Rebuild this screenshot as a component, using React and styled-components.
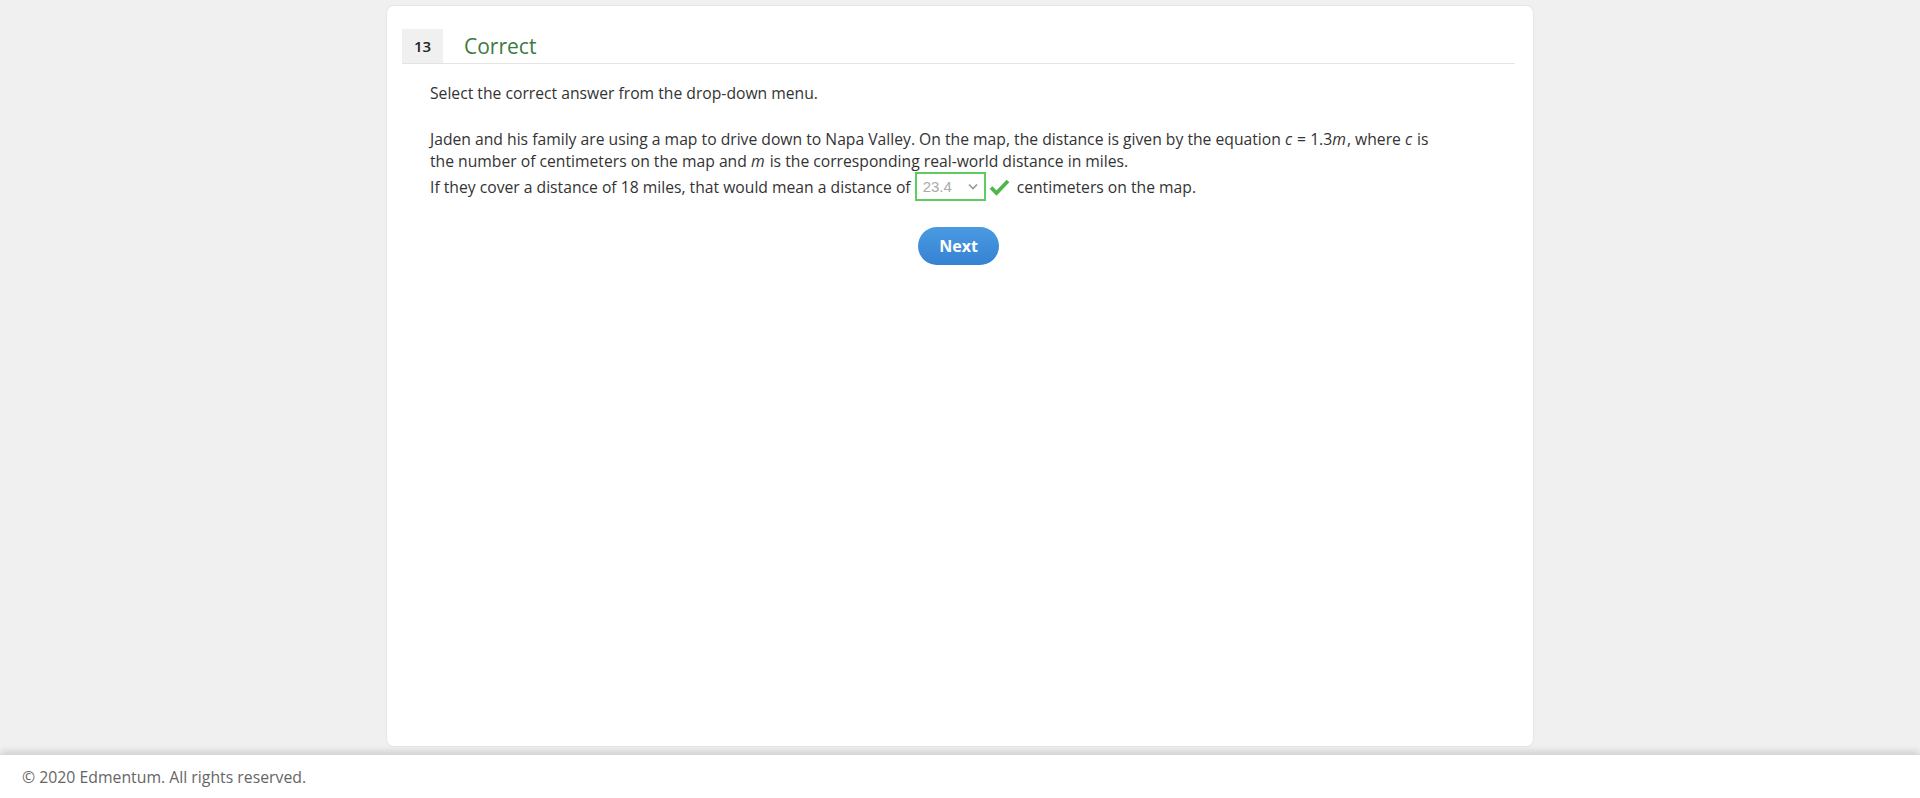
import React from 'react';
import styled, { createGlobalStyle } from 'styled-components';

const GlobalStyle = createGlobalStyle`
  html, body {
    margin: 0;
    padding: 0;
    height: 100%;
  }
  body {
    background: #f0f0f0;
    font-family: 'Open Sans', 'DejaVu Sans', sans-serif;
    color: #333;
  }
  #root {
    height: 100%;
  }
`;

const Page = styled.div`
  display: flex;
  flex-direction: column;
  height: 100vh;
`;

const Main = styled.main`
  flex: 1;
  display: flex;
  justify-content: center;
  padding: 5px 0 7px;
  min-height: 0;
`;

const Card = styled.section`
  width: 1148px;
  box-sizing: border-box;
  background: #fff;
  border: 1px solid #e6e6e6;
  border-radius: 8px;
  padding: 23px 18px 0 15px;
`;

const Header = styled.div`
  display: flex;
  align-items: center;
  height: 34px;
  border-bottom: 1px solid #e4e4e4;
`;

const Badge = styled.span`
  display: flex;
  align-items: center;
  justify-content: center;
  width: 41px;
  height: 100%;
  background: #f0f0f0;
  font-size: 15px;
  font-weight: 600;
  color: #222;
`;

const Status = styled.h2`
  margin: 0 0 0 21px;
  font-size: 21px;
  font-weight: 500;
  color: #3d7a3f;
  line-height: 1;
`;

const Body = styled.div`
  padding: 18px 0 0 28px;
  width: 1022px;
  font-size: 15.7px;
  line-height: 22px;
  color: #333;
`;

const Instruction = styled.p`
  margin: 0 0 24px;
`;

const Question = styled.p`
  margin: 0;
`;

const Var = styled.i`
  font-style: italic;
  padding-right: 1px;
`;

const Line = styled.span`
  display: flex;
  align-items: center;
  height: 29px;
`;

const Select = styled.span`
  display: inline-flex;
  align-items: center;
  justify-content: space-between;
  box-sizing: border-box;
  width: 71px;
  height: 29px;
  margin: 0 3px 0 4px;
  padding: 0 6px 0 6px;
  border: 2px solid #5fcc5f;
  font-family: 'Liberation Sans', Arial, sans-serif;
  font-size: 15px;
  color: #aaa;
`;

const Check = styled.svg`
  width: 21px;
  height: 18px;
  margin-right: 7px;
`;

const Actions = styled.div`
  display: flex;
  justify-content: center;
  padding-top: 26px;
`;

const NextButton = styled.button`
  width: 81px;
  height: 38px;
  border: none;
  border-radius: 19px;
  background: linear-gradient(#4a9ae2, #3582d2);
  color: #fff;
  font-family: 'Open Sans', sans-serif;
  font-size: 16px;
  font-weight: 700;
  cursor: pointer;
`;

const Footer = styled.footer`
  height: 43px;
  flex-shrink: 0;
  display: flex;
  align-items: center;
  padding-left: 22px;
  background: #fff;
  box-shadow: 0 -4px 6px -1px rgba(0, 0, 0, 0.13);
  border-top: 1px solid #d8d8d8;
  font-size: 15.8px;
  color: #666;
  position: relative;
`;

export default function App() {
  return (
    <Page>
      <GlobalStyle />
      <Main>
        <Card>
          <Header>
            <Badge>13</Badge>
            <Status>Correct</Status>
          </Header>
          <Body>
            <Instruction>Select the correct answer from the drop-down menu.</Instruction>
            <Question>
              Jaden and his family are using a map to drive down to Napa Valley. On the map, the
              distance is given by the equation <Var>c</Var> = 1.3<Var>m</Var>, where <Var>c</Var> is
              the number of centimeters on the map and <Var>m</Var> is the corresponding real-world
              distance in miles.
            </Question>
            <Line>
              If they cover a distance of 18 miles, that would mean a distance of
              <Select>
                23.4
                <svg width="10" height="7" viewBox="0 0 10 7">
                  <path d="M1 1.5 L5 5.5 L9 1.5" fill="none" stroke="#999" strokeWidth="1.6" />
                </svg>
              </Select>
              <Check viewBox="0 0 21 18">
                <path d="M2 9.5 L7.5 15 L19 3" fill="none" stroke="#4cb84c" strokeWidth="3.8" strokeLinejoin="miter" />
              </Check>
              centimeters on the map.
            </Line>
          </Body>
          <Actions>
            <NextButton>Next</NextButton>
          </Actions>
        </Card>
      </Main>
      <Footer>© 2020 Edmentum. All rights reserved.</Footer>
    </Page>
  );
}
